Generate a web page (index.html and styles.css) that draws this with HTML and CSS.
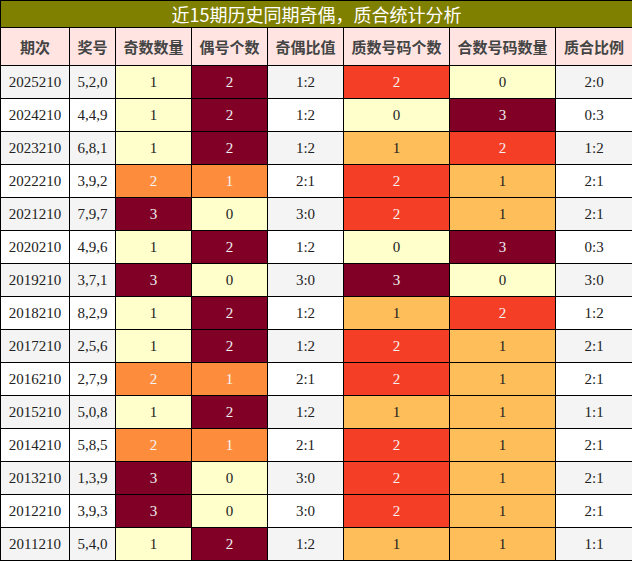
FILE: index.html
```html
<!DOCTYPE html>
<html lang="zh">
<head>
<meta charset="utf-8">
<title>近15期历史同期奇偶，质合统计分析</title>
<link rel="stylesheet" href="styles.css">
</head>
<body>
<table class="stats">
<colgroup>
<col class="c-issue"><col class="c-num"><col class="c-mid"><col class="c-mid"><col class="c-mid"><col class="c-wide"><col class="c-wide"><col class="c-last">
</colgroup>
<thead>
<tr class="title-row"><th colspan="8">近15期历史同期奇偶，质合统计分析</th></tr>
<tr class="head-row"><th>期次</th><th>奖号</th><th>奇数数量</th><th>偶号个数</th><th>奇偶比值</th><th>质数号码个数</th><th>合数号码数量</th><th>质合比例</th></tr>
</thead>
<tbody>
<tr class="gray"><td>2025210</td><td>5,2,0</td><td class="y">1</td><td class="dr">2</td><td>1:2</td><td class="r">2</td><td class="y">0</td><td>2:0</td></tr>
<tr><td>2024210</td><td>4,4,9</td><td class="y">1</td><td class="dr">2</td><td>1:2</td><td class="y">0</td><td class="dr">3</td><td>0:3</td></tr>
<tr class="gray"><td>2023210</td><td>6,8,1</td><td class="y">1</td><td class="dr">2</td><td>1:2</td><td class="lo">1</td><td class="r">2</td><td>1:2</td></tr>
<tr><td>2022210</td><td>3,9,2</td><td class="o">2</td><td class="o">1</td><td>2:1</td><td class="r">2</td><td class="lo">1</td><td>2:1</td></tr>
<tr class="gray"><td>2021210</td><td>7,9,7</td><td class="dr">3</td><td class="y">0</td><td>3:0</td><td class="r">2</td><td class="lo">1</td><td>2:1</td></tr>
<tr><td>2020210</td><td>4,9,6</td><td class="y">1</td><td class="dr">2</td><td>1:2</td><td class="y">0</td><td class="dr">3</td><td>0:3</td></tr>
<tr class="gray"><td>2019210</td><td>3,7,1</td><td class="dr">3</td><td class="y">0</td><td>3:0</td><td class="dr">3</td><td class="y">0</td><td>3:0</td></tr>
<tr><td>2018210</td><td>8,2,9</td><td class="y">1</td><td class="dr">2</td><td>1:2</td><td class="lo">1</td><td class="r">2</td><td>1:2</td></tr>
<tr class="gray"><td>2017210</td><td>2,5,6</td><td class="y">1</td><td class="dr">2</td><td>1:2</td><td class="r">2</td><td class="lo">1</td><td>2:1</td></tr>
<tr><td>2016210</td><td>2,7,9</td><td class="o">2</td><td class="o">1</td><td>2:1</td><td class="r">2</td><td class="lo">1</td><td>2:1</td></tr>
<tr class="gray"><td>2015210</td><td>5,0,8</td><td class="y">1</td><td class="dr">2</td><td>1:2</td><td class="lo">1</td><td class="lo">1</td><td>1:1</td></tr>
<tr><td>2014210</td><td>5,8,5</td><td class="o">2</td><td class="o">1</td><td>2:1</td><td class="r">2</td><td class="lo">1</td><td>2:1</td></tr>
<tr class="gray"><td>2013210</td><td>1,3,9</td><td class="dr">3</td><td class="y">0</td><td>3:0</td><td class="r">2</td><td class="lo">1</td><td>2:1</td></tr>
<tr><td>2012210</td><td>3,9,3</td><td class="dr">3</td><td class="y">0</td><td>3:0</td><td class="r">2</td><td class="lo">1</td><td>2:1</td></tr>
<tr class="gray"><td>2011210</td><td>5,4,0</td><td class="y">1</td><td class="dr">2</td><td>1:2</td><td class="lo">1</td><td class="lo">1</td><td>1:1</td></tr>
</tbody>
</table>
</body>
</html>
```

FILE: styles.css
```css
html, body {
  margin: 0;
  padding: 0;
  background: #ffffff;
}

.stats {
  border-collapse: collapse;
  table-layout: fixed;
  width: 632px;
}

.c-issue { width: 69px; }
.c-num { width: 46px; }
.c-mid { width: 76px; }
.c-wide { width: 106px; }
.c-last { width: 77px; }

.stats th,
.stats td {
  border: 1px solid #000;
  padding: 0;
  text-align: center;
  overflow: hidden;
  white-space: nowrap;
}

.title-row th {
  height: 26px;
  background: #808000;
  color: #ffffff;
  font-family: "Noto Sans CJK SC", "Liberation Serif", serif;
  font-size: 18px;
  font-weight: normal;
  line-height: 26px;
}

.head-row th {
  height: 37px;
  background: #ffe4e1;
  color: #444444;
  font-family: "Noto Sans CJK SC", sans-serif;
  font-size: 15px;
  font-weight: bold;
  line-height: 37px;
}

.stats td {
  height: 32px;
  background: #ffffff;
  color: #222222;
  font-family: "Liberation Serif", "Noto Sans CJK SC", serif;
  font-size: 15px;
  line-height: 32px;
}

.stats tr.gray td {
  background: #f4f4f4;
}

.stats tr td.y { background: #ffffcc; color: #222222; }
.stats tr td.lo { background: #febf5a; color: #222222; }
.stats tr td.o { background: #fd8d3c; color: #f4f4f4; }
.stats tr td.r { background: #f43f26; color: #f8f0f0; }
.stats tr td.dr { background: #800026; color: #f0f0f0; }
```
